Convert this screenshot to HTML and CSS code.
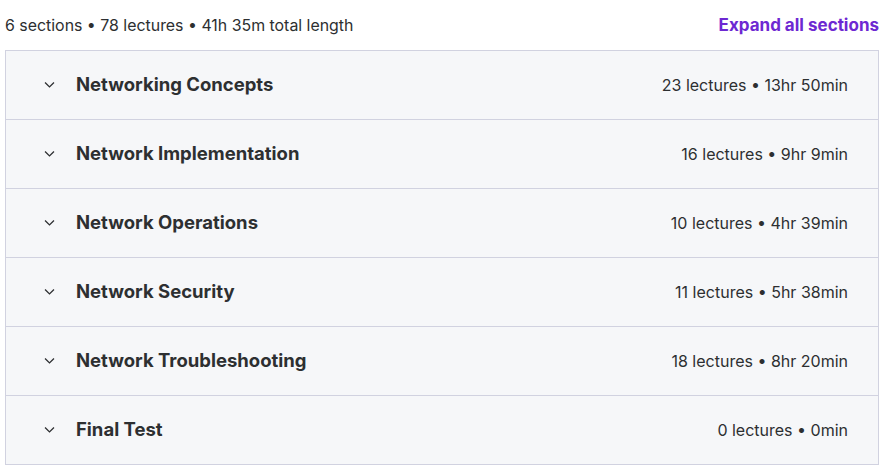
FILE: index.html
```html
<!DOCTYPE html>
<html>
<head>
<meta charset="utf-8">
<link rel="stylesheet" href="styles.css">
</head>
<body>
<div class="curriculum">
  <div class="header">
    <span class="summary">6 sections • 78 lectures • 41h 35m total length</span>
    <button class="expand">Expand all sections</button>
  </div>
  <div class="sections">
    <div class="section">
      <svg class="chev" viewBox="0 0 16 16"><path d="M2.5 5.5 L8 11 L13.5 5.5" fill="none" stroke="#2d2f31" stroke-width="1.6"/></svg>
      <span class="title">Networking Concepts</span>
      <span class="meta">23 lectures • 13hr 50min</span>
    </div>
    <div class="section">
      <svg class="chev" viewBox="0 0 16 16"><path d="M2.5 5.5 L8 11 L13.5 5.5" fill="none" stroke="#2d2f31" stroke-width="1.6"/></svg>
      <span class="title">Network Implementation</span>
      <span class="meta">16 lectures • 9hr 9min</span>
    </div>
    <div class="section">
      <svg class="chev" viewBox="0 0 16 16"><path d="M2.5 5.5 L8 11 L13.5 5.5" fill="none" stroke="#2d2f31" stroke-width="1.6"/></svg>
      <span class="title">Network Operations</span>
      <span class="meta">10 lectures • 4hr 39min</span>
    </div>
    <div class="section">
      <svg class="chev" viewBox="0 0 16 16"><path d="M2.5 5.5 L8 11 L13.5 5.5" fill="none" stroke="#2d2f31" stroke-width="1.6"/></svg>
      <span class="title">Network Security</span>
      <span class="meta">11 lectures • 5hr 38min</span>
    </div>
    <div class="section">
      <svg class="chev" viewBox="0 0 16 16"><path d="M2.5 5.5 L8 11 L13.5 5.5" fill="none" stroke="#2d2f31" stroke-width="1.6"/></svg>
      <span class="title">Network Troubleshooting</span>
      <span class="meta">18 lectures • 8hr 20min</span>
    </div>
    <div class="section">
      <svg class="chev" viewBox="0 0 16 16"><path d="M2.5 5.5 L8 11 L13.5 5.5" fill="none" stroke="#2d2f31" stroke-width="1.6"/></svg>
      <span class="title">Final Test</span>
      <span class="meta">0 lectures • 0min</span>
    </div>
  </div>
</div>
</body>
</html>
```
FILE: styles.css
```css
* { box-sizing: border-box; }
html, body { margin: 0; padding: 0; background: #fff; }
body { font-family: Inter, "Noto Sans", sans-serif; color: #2d2f31; }
.curriculum { padding: 0 6px 0 5px; width: 885px; }
.header { height: 50px; display: flex; align-items: center; justify-content: space-between; }
.summary { font-size: 15.9px; color: #2d2f31; }
.expand { background: none; border: 0; padding: 0; font-family: inherit; font-size: 17px; font-weight: 700; color: #6d28d2; cursor: pointer; }
.sections { border: 1px solid #d1d2e0; }
.section { height: 69px; display: flex; align-items: center; background: #f6f7f9; padding: 0 30px 0 37px; border-top: 1px solid #d1d2e0; }
.section:first-child { border-top: 0; height: 68px; }
.chev { width: 13px; height: 13px; flex: none; margin-top: -2px; }
.title { margin-left: 20px; font-size: 18.5px; font-weight: 700; flex: 1; margin-top: -2px; }
.meta { font-size: 16px; color: #2d2f31; }
```
